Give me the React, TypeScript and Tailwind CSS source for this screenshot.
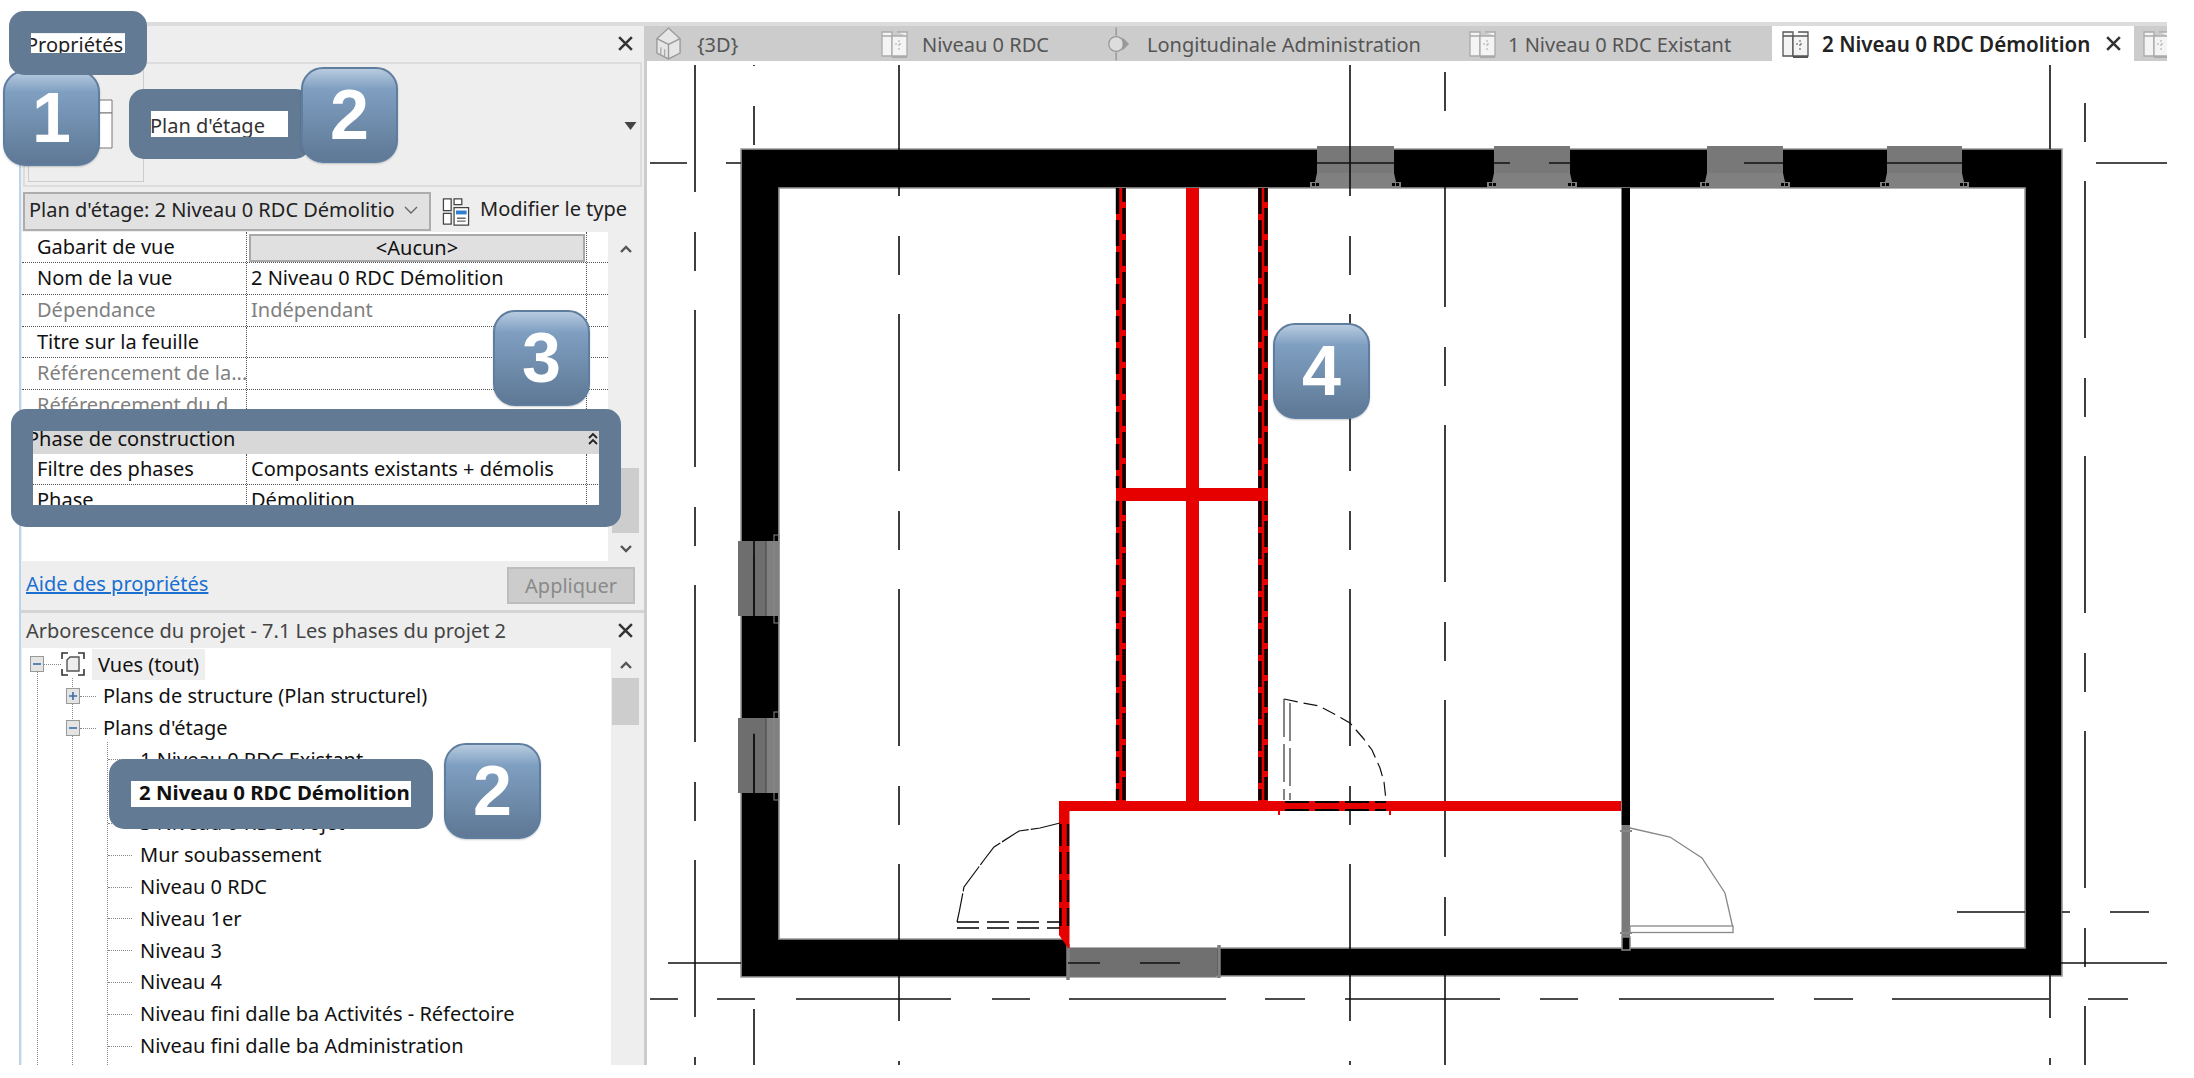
import React from "react";
import clsx from "clsx";

const Close = ({className}: {className?: string}) => (
    <svg viewBox="0 0 16 16" className={clsx("w-[17px] h-[17px]", className)}>
        <path d="M2 2 L14 14 M14 2 L2 14" stroke="#333" strokeWidth="2.4" fill="none"/>
    </svg>
)

const Chevron = ({up}: {up?: boolean}) => (
    <svg viewBox="0 0 14 10" className="w-[14px] h-[10px]">
        <path d={up ? "M2 8 L7 3 L12 8" : "M2 2 L7 7 L12 2"} stroke="#555" strokeWidth="2.4" fill="none"/>
    </svg>
)

const PageIcon = ({dark}: {dark?: boolean}) => {
    const c = dark ? "#555" : "#aaa"
    return (
        <svg viewBox="0 0 30 28" className="w-[30px] h-[28px] shrink-0">
            <path d="M2 2 H12 V6 H2 Z M2 6 V26 H12 V6" fill="#f4f4f4" stroke={c} strokeWidth="1.3"/>
            <path d="M12 6 H27 V26 H12 Z M17 2 H27 V6" fill="#f4f4f4" stroke={c} strokeWidth="1.3"/>
            <path d="M12 26 H27 V28 H12 Z" fill={c}/>
            <path d="M19 10 V20 M15 14 H23" stroke={c} strokeWidth="1" strokeDasharray="2 2"/>
        </svg>
    )
}

const HouseIcon = () => (
    <svg viewBox="0 0 28 36" className="w-[27px] h-[35px] shrink-0">
        <path d="M2 13 L14 2 L26 13 V28 L14 34 L2 28 Z" fill="#e6e6e6" stroke="#999" strokeWidth="1.4"/>
        <path d="M2 13 L14 19 L26 13 M14 19 V34" fill="none" stroke="#999" strokeWidth="1.4"/>
        <path d="M6 22 V30 M10 24 V32" stroke="#aaa" strokeWidth="1.4"/>
    </svg>
)

const SectionIcon = () => (
    <svg viewBox="0 0 26 38" className="w-[24px] h-[36px] shrink-0">
        <circle cx="11" cy="19" r="8" fill="#ddd" stroke="#999" strokeWidth="1.4"/>
        <path d="M11 1 V10 M11 28 V37" stroke="#999" strokeWidth="1.6"/>
        <path d="M18 12 L25 19 L18 26 Z" fill="#999"/>
    </svg>
)

const ModifyIcon = () => (
    <svg viewBox="0 0 28 30" className="w-[28px] h-[29px] shrink-0">
        <path d="M1 2 H9 V14 H1 Z M12 2 H20 V8 H12 Z M1 17 H9 V28 H1 Z" fill="#fff" stroke="#444" strokeWidth="1.3"/>
        <path d="M12 11 H27 V29 H12 Z" fill="#fff" stroke="#444" strokeWidth="1.3"/>
        <rect x="14" y="14" width="11" height="4" fill="#2f7fd0"/>
        <path d="M15 22 H24 M15 25 H24" stroke="#666" strokeWidth="1.4"/>
    </svg>
)

const ViewsIcon = () => (
    <svg viewBox="0 0 24 24" className="w-[24px] h-[24px] shrink-0">
        <path d="M1 7 V1 H7 M17 1 H23 V7 M1 17 V23 H7 M17 23 H23 V17" fill="none" stroke="#333" strokeWidth="1.6"/>
        <path d="M9 5 H18 V19 H6 V8 Z" fill="#eee" stroke="#555" strokeWidth="1.4"/>
    </svg>
)

const TreeBox = ({plus}: {plus?: boolean}) => (
    <span className="flex items-center justify-center w-[14px] h-[16px] bg-[#e4e4e4] border border-[#999] shrink-0">
        <svg viewBox="0 0 10 10" className="w-[10px] h-[10px]">
            <path d={plus ? "M1 5 H9 M5 1 V9" : "M1 5 H9"} stroke="#3a6ea5" strokeWidth="1.6"/>
        </svg>
    </span>
)

const rows = [
    {label: "Gabarit de vue", button: "<Aucun>"},
    {label: "Nom de la vue", value: "2 Niveau 0 RDC Démolition"},
    {label: "Dépendance", value: "Indépendant", muted: true},
    {label: "Titre sur la feuille"},
    {label: "Référencement de la...", muted: true},
    {label: "Référencement du d...", muted: true},
]

const PropRow = ({label, value, button, muted}: {label: string, value?: string, button?: string, muted?: boolean}) => (
    <div className={clsx("flex h-[31.7px] border-b border-dotted border-[#555] leading-[30px]", muted ? "text-[#808080]" : "text-[#111]")}>
        <div className="w-[225px] pl-[15px] border-r border-dotted border-[#555] whitespace-nowrap overflow-hidden">{label}</div>
        <div className="w-[340px] border-r border-dotted border-[#555] pl-[4px] whitespace-nowrap">
            {button ? (
                <div className="h-[28px] -ml-[2px] mr-[1px] mt-[2px] bg-[#e0e0e0] border-2 border-[#a8a8a8] text-center leading-[24px]">{button}</div>
            ) : value}
        </div>
    </div>
)

const PropertiesPanel = () => (
    <div className="flex flex-col h-[584px] bg-[#eeeeee]">
        <header className="flex items-center h-[36px] pl-[10px] pr-[10px] justify-between">
            <span className="w-[94px] h-[20px] bg-white leading-[22px] -indent-[5px] text-[#222] whitespace-nowrap">Propriétés</span>
            <Close/>
        </header>
        <div className="flex mx-[2px] h-[125px] border-2 border-[#dddddd] relative">
            <div className="w-[116px] ml-[3px] mt-[2px] mb-[3px] border border-[#cccccc] flex items-center justify-end pr-[30px]">
                <svg viewBox="0 0 50 50" className="w-[50px] h-[50px]">
                    <path d="M36 1 H49 V14 H36 Z" fill="#fff" stroke="#777" strokeWidth="1"/>
                    <path d="M1 14 H49 V49 H1 Z" fill="#fff" stroke="#777" strokeWidth="1"/>
                </svg>
            </div>
            <span className="w-[138px] h-[26px] ml-[6px] mt-[47px] bg-white leading-[29px] text-[#333] whitespace-nowrap">Plan d'étage</span>
            <svg viewBox="0 0 12 8" className="w-[13px] h-[8px] ml-auto mr-[3px] mt-[58px]">
                <path d="M0 0 H12 L6 8 Z" fill="#444"/>
            </svg>
        </div>
        <div className="flex items-center h-[41px] mx-[2px] mt-[4px]">
            <div className="flex items-center h-[39px] w-[408px] bg-[#e1e1e1] border-2 border-[#adadad] pl-[4px] pb-[2px] text-[#222]">
                <span className="w-[366px] overflow-hidden whitespace-nowrap">Plan d'étage: 2 Niveau 0 RDC Démolition</span>
                <svg viewBox="0 0 14 10" className="w-[14px] h-[10px] ml-[9px]">
                    <path d="M1 2 L7 8 L13 2" stroke="#666" strokeWidth="1.4" fill="none"/>
                </svg>
            </div>
            <div className="flex items-center ml-[11px] gap-[10px] whitespace-nowrap text-[#222]">
                <ModifyIcon/>
                <span className="-mt-[5px]">Modifier le type</span>
            </div>
        </div>
        <div className="flex h-[330px] ml-[1px]">
            <div className="w-[586px] bg-white overflow-hidden">
                {rows.map((row) => (
                    <PropRow key={row.label} {...row}/>
                ))}
                <div className="flex items-center justify-between h-[32px] bg-[#d8d8d8] pl-[9px] pr-[10px] pt-[2px] leading-[22px] text-[#111]">
                    <span className="-ml-[4px]">Phase de construction</span>
                    <svg viewBox="0 0 10 16" className="w-[10px] h-[16px]">
                        <path d="M1 7 L5 3 L9 7 M1 13 L5 9 L9 13" stroke="#222" strokeWidth="1.8" fill="none"/>
                    </svg>
                </div>
                <PropRow label="Filtre des phases" value="Composants existants + démolis"/>
                <PropRow label="Phase" value="Démolition"/>
            </div>
            <div className="flex flex-col items-center w-[32px] pl-[3px]">
                <div className="mt-[12px] h-[10px] flex items-center"><Chevron up/></div>
                <div className="w-[27px] h-[65px] mt-[214px] bg-[#cdcdcd]"/>
                <div className="mt-[11px]"><Chevron/></div>
            </div>
        </div>
        <div className="flex items-center justify-between h-[49px] pl-[5px] pr-[9px]">
            <a className="text-[#1a6fd0] underline whitespace-nowrap -mt-[4px]">Aide des propriétés</a>
            <button className="w-[128px] h-[37px] bg-[#cccccc] border-2 border-[#bdbdbd] text-[#8a8a8a]">Appliquer</button>
        </div>
    </div>
)

const plans = [
    "1 Niveau 0 RDC Existant",
    "2 Niveau 0 RDC Démolition",
    "3 Niveau 0 RDC Projet",
    "Mur soubassement",
    "Niveau 0 RDC",
    "Niveau 1er",
    "Niveau 3",
    "Niveau 4",
    "Niveau fini dalle ba Activités - Réfectoire",
    "Niveau fini dalle ba Administration",
]

const Dots = ({className}: {className: string}) => (
    <span className={clsx("border-t border-dotted border-[#888] shrink-0", className)}/>
)

const ProjectBrowser = () => (
    <div className="flex flex-col flex-1 min-h-0 border-t-[3px] border-[#d4d4d4] bg-[#eeeeee]">
        <header className="flex items-center justify-between h-[35px] pl-[5px] pr-[10px] shrink-0">
            <span className="text-[#444] whitespace-nowrap">Arborescence du projet - 7.1 Les phases du projet 2</span>
            <Close/>
        </header>
        <div className="flex flex-1 min-h-0 ml-[1px]">
            <div className="w-[589px] bg-white overflow-hidden relative text-[#111]">
                <div className="absolute left-[15px] top-[24px] bottom-0 border-l border-dotted border-[#888]"/>
                <div className="absolute left-[50px] top-[30px] bottom-0 border-l border-dotted border-[#888]"/>
                <div className="absolute left-[85px] top-[94px] bottom-0 border-l border-dotted border-[#888]"/>
                <div className="relative flex items-center h-[32px] pl-[8px] whitespace-nowrap">
                    <TreeBox/>
                    <Dots className="w-[17px]"/>
                    <ViewsIcon/>
                    <span className="ml-[7px] px-[6px] bg-[#eeeeee] leading-[31px]">Vues (tout)</span>
                </div>
                <div className="relative flex items-center h-[32px] pl-[44px] whitespace-nowrap">
                    <TreeBox plus/>
                    <Dots className="w-[16px] mr-[7px]"/>
                    <span>Plans de structure (Plan structurel)</span>
                </div>
                <div className="relative flex items-center h-[32px] pl-[44px] whitespace-nowrap">
                    <TreeBox/>
                    <Dots className="w-[16px] mr-[7px]"/>
                    <span>Plans d'étage</span>
                </div>
                {plans.map((plan) => {
                    const active = plan.startsWith("2 ")
                    return (
                        <div key={plan} className="relative flex items-center h-[31.8px] pl-[86px] whitespace-nowrap">
                            <Dots className="w-[24px]"/>
                            {active ? (
                                <span className="w-[280px] h-[26px] -ml-[1px] pl-[8px] bg-white font-bold text-[20.4px] leading-[26px] text-[#111]">{plan}</span>
                            ) : (
                                <span className="ml-[8px]">{plan}</span>
                            )}
                        </div>
                    )
                })}
            </div>
            <div className="flex flex-col items-center w-[27px] ml-[1px] bg-[#eeeeee]">
                <div className="mt-[12px] h-[10px] flex items-center"><Chevron up/></div>
                <div className="w-[27px] h-[47px] mt-[8px] bg-[#cdcdcd]"/>
            </div>
        </div>
    </div>
)

const tabs = [
    {label: "{3D}", icon: <HouseIcon/>, width: "w-[225px]", gap: "gap-[15px]"},
    {label: "Niveau 0 RDC", icon: <PageIcon/>, width: "w-[226px]", gap: "gap-[12px]"},
    {label: "Longitudinale Administration", icon: <SectionIcon/>, width: "w-[362px]", gap: "gap-[17px]"},
    {label: "1 Niveau 0 RDC Existant", icon: <PageIcon/>, width: "w-[312px]", gap: "gap-[10px]"},
]

const TabBar = () => (
    <div className="flex h-[35px] bg-[#cccccc] shrink-0 overflow-hidden">
        {tabs.map((tab) => (
            <div key={tab.label} className={clsx("flex items-center pl-[8px] text-[#555] whitespace-nowrap", tab.width, tab.gap)}>
                {tab.icon}
                <span className="pt-[2px]">{tab.label}</span>
            </div>
        ))}
        <div className="flex items-center w-[362px] pl-[9px] gap-[11px] bg-white text-[#222] font-semibold whitespace-nowrap">
            <PageIcon dark/>
            <span className="w-[273px] pt-[2px] text-[20.6px]">2 Niveau 0 RDC Démolition</span>
            <Close className="-ml-[1px]"/>
        </div>
        <div className="flex items-center pl-[8px] w-[33px] overflow-hidden">
            <PageIcon/>
        </div>
    </div>
)

// grid lines repeat every 275px: long dash, gap, short dash, gap
const dashDot = (x: number, longStart: number) => {
    const segs: [number, number][] = []
    for (let y = longStart - 275 * 2; y < 1065; y += 275) {
        segs.push([y, y + 157])
        segs.push([y + 197, y + 236])
    }
    return segs
        .map(([a, b]) => [Math.max(a, 65), Math.min(b, 1065)])
        .filter(([a, b]) => b > a)
        .map(([a, b]) => `M${x} ${a} V${b}`)
        .join(" ")
}

const gridV = [[695, 310], [754, 184], [899, 314], [1350, 314], [1445, 150], [2085, 181]]
const gridH = "M650 163 H687 M726 163 H741 M1317 163 H1394 M1494 163 H1510 M1549 163 H1570 M1744 163 H1783 M1887 163 H1962 M2096 163 H2167 " +
    "M668 963 H741 M1068 963 H1100 M1140 963 H1180 M2061 963 H2167 M1957 912 H2025 M2062 912 H2070 M2110 912 H2149 " +
    "M650 999 H678 M717 999 H755 M796 999 H951 M992 999 H1030 M1069 999 H1226 M1265 999 H1305 M1345 999 H1500 M1540 999 H1578 M1619 999 H1774 M1814 999 H1853 M1892 999 H2049 M2088 999 H2128 " +
    "M2050 65 V149 M2050 975 V1018 M2050 1058 V1065"

const TopWindow = ({a, b}: {a: number, b: number}) => (
    <g>
        <rect x={a} y={146} width={b - a} height={27} fill="#787878"/>
        <path d={`M${a} 173 H${b} L${b + 2} 182 H${b + 7} V188 H${a - 7} V182 H${a - 2} Z`} fill="#808080"/>
        <path d={`M${a - 5} 184.5 h3 M${a - 1} 184.5 h3 M${b - 2} 184.5 h3 M${b + 2} 184.5 h3`} stroke="#000" strokeWidth="3"/>
    </g>
)

const SideWindow = ({y1, y2}: {y1: number, y2: number}) => (
    <g>
        <rect x={738} y={y1} width={28} height={y2 - y1} fill="#6e6e6e"/>
        <rect x={766} y={y1} width={12} height={y2 - y1} fill="#808080"/>
        <path d={`M754 ${y1 + 15} V${y2} M766 ${y1} V${y2}`} stroke="#444" strokeWidth="1"/>
        <rect x={774} y={y1 - 6} width={5} height={y2 - y1 + 13} fill="none" stroke="#888" strokeWidth="1"/>
    </g>
)

const FloorPlan = () => (
    <svg viewBox="647 61 1520 1004" className="w-[1520px] h-[1004px] block">
        <path fillRule="evenodd" d="M741 149 H2062 V976 H1217 V977 H741 Z M779 188 V939 H1068 V948 H2025 V188 Z" fill="#000" stroke="#999" strokeWidth="1.6"/>
        <path d="M1068 939 V948" stroke="#000" strokeWidth="1"/>
        <rect x="1621.5" y="188" width="8.5" height="637" fill="#000"/>
        {[[1317, 1394], [1494, 1570], [1707, 1783], [1887, 1962]].map(([a, b]) => (
            <TopWindow key={a} a={a} b={b}/>
        ))}
        <SideWindow y1={541} y2={616}/>
        <SideWindow y1={718} y2={793}/>
        <rect x="1068" y="948" width="149" height="28" fill="#707070"/>
        <path d="M1068 944 V980 M1219 945 V978" stroke="#808080" strokeWidth="3.5"/>
        <rect x="1621.5" y="825" width="8.5" height="112" fill="#7a7a7a"/>
        <path d="M1620 831 H1632 M1620 933 H1632" stroke="#888" strokeWidth="2"/>
        <rect x="1622" y="937" width="8" height="13" fill="#000" stroke="#888" strokeWidth="1.5"/>
        <path d="M1630 828 L1670 837 L1702 858 L1725 893 L1732.5 926" fill="none" stroke="#888" strokeWidth="1.3"/>
        <rect x="1630" y="926" width="103" height="6.5" fill="#fff" stroke="#888" strokeWidth="1.3"/>

        {gridV.map(([x, s]) => (
            <path key={x} d={dashDot(x, s)} stroke="#000" strokeWidth="1.5"/>
        ))}
        <path d={gridH} stroke="#111" strokeWidth="1.6"/>

        <g fill="#e60000">
            <rect x="1116" y="188" width="10" height="613"/>
            <rect x="1186" y="188" width="13" height="613"/>
            <rect x="1258" y="188" width="10" height="613"/>
            <rect x="1116" y="488" width="152" height="13"/>
            <rect x="1059" y="801" width="562" height="10"/>
            <path d="M1059 801 H1069.5 V948 H1068 L1059 935 Z"/>
        </g>
        <path d="M1117.5 188 V488 M1117.5 501 V800 M1260 188 V488 M1260 501 V800" stroke="#000" strokeWidth="3.4" strokeDasharray="26 6"/>
        <path d="M1124 188 V488 M1124 501 V800 M1266 188 V488 M1266 501 V800" stroke="#000" strokeWidth="3.4" strokeDasharray="26 6" strokeDashoffset="12"/>
        <path d="M1060.5 824 V926 M1068 824 V926" stroke="#000" strokeWidth="2.4" strokeDasharray="22 6"/>

        <path d="M1060 823 L1040 828 L1019 831 L994 847 L984 860 L964 887 L959 913 L957 922" fill="none" stroke="#111" strokeWidth="1.2" strokeDasharray="30 2"/>
        <path d="M957 922 H1060 M957 928 H1060" stroke="#000" strokeWidth="1.6" strokeDasharray="22 8"/>
        <path d="M1284 699 L1303 703 L1319 706 L1336 715 L1350 723 L1363 738 L1372 750 L1380 768 L1384 782 L1386 800" fill="none" stroke="#111" strokeWidth="1.2" strokeDasharray="14 6"/>
        <path d="M1284 699 V800 M1290 703 V800" stroke="#222" strokeWidth="1.1" strokeDasharray="38 7"/>
        <path d="M1285 802 H1386 M1285 810 H1386" stroke="#000" strokeWidth="2" strokeDasharray="24 6"/>
        <path d="M1279 805 V815 M1390 805 V815" stroke="#e60000" strokeWidth="2"/>
    </svg>
)

const Callout = ({className}: {className: string}) => (
    <div className={clsx("absolute border-[22px] border-[#627a94] rounded-[15px]", className)}/>
)

const Badge = ({n, className}: {n: number, className: string}) => (
    <div className={clsx("absolute w-[97px] h-[96px] rounded-[22px] border-2 border-[#5f7d9e] bg-linear-to-b from-[#b7cbdf] via-[#7f9fc1] via-[22%] to-[#5e7895] shadow-[0_1px_2px_rgba(0,0,0,0.2)] flex items-center justify-center font-['Liberation_Sans'] font-bold text-[70px] leading-none text-white", className)}>
        {n}
    </div>
)

export default function App() {
    return (
        <div className="relative w-[2194px] h-[1078px] bg-white overflow-hidden font-['Noto_Sans',sans-serif] text-[20px]">
            <div className="ml-[19px] mt-[22px] w-[2148px] h-[1043px] flex border-t-4 border-[#dcdcdc]">
                <aside className="flex flex-col w-[625px] shrink-0 border-l-2 border-[#bcd4ec]">
                    <PropertiesPanel/>
                    <ProjectBrowser/>
                </aside>
                <div className="w-[3px] bg-[#cccccc] shrink-0"/>
                <main className="flex flex-col w-[1520px]">
                    <TabBar/>
                    <FloorPlan/>
                </main>
            </div>

            <Badge n={1} className="left-[3px] top-[70px]"/>
            <Callout className="left-[9px] top-[11px] w-[138px] h-[64px]"/>
            <Callout className="left-[129px] top-[89px] w-[181px] h-[70px]"/>
            <Badge n={2} className="left-[301px] top-[67px]"/>
            <Badge n={3} className="left-[493px] top-[310px]"/>
            <Callout className="left-[11px] top-[409px] w-[610px] h-[118px]"/>
            <Callout className="left-[109px] top-[759px] w-[324px] h-[70px]"/>
            <Badge n={2} className="left-[444px] top-[743px]"/>
            <Badge n={4} className="left-[1273px] top-[323px]"/>
        </div>
    )
}
